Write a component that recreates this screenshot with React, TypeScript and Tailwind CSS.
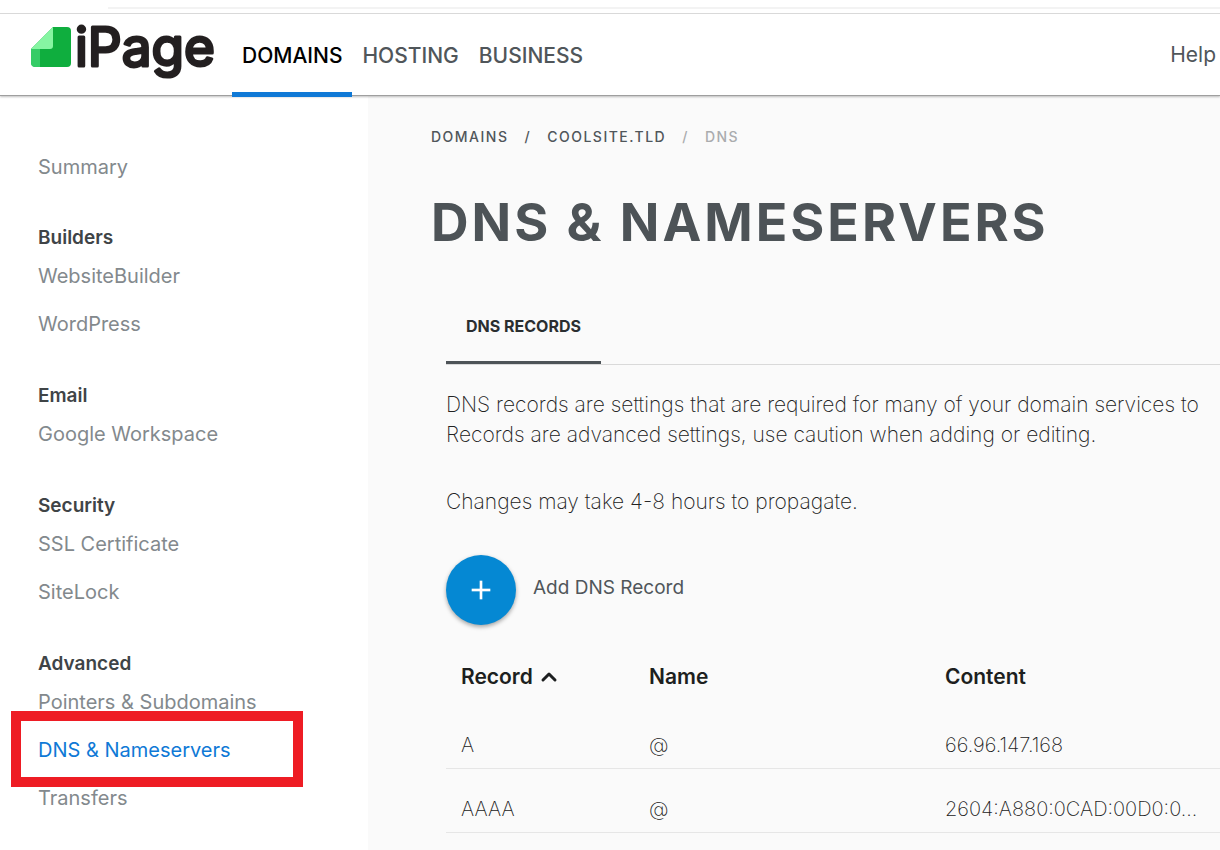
import { ChevronUp, Plus } from "lucide-react";

const navLinks = [
  { label: "DOMAINS", active: true },
  { label: "HOSTING", active: false },
  { label: "BUSINESS", active: false },
];

const sections = [
  { title: "Builders", items: ["WebsiteBuilder", "WordPress"] },
  { title: "Email", items: ["Google Workspace"] },
  { title: "Security", items: ["SSL Certificate", "SiteLock"] },
  { title: "Advanced", items: ["Pointers & Subdomains", "DNS & Nameservers", "Transfers"] },
];

const records = [
  { type: "A", name: "@", content: "66.96.147.168" },
  { type: "AAAA", name: "@", content: "2604:A880:0CAD:00D0:0..." },
];

function Logo() {
  return (
    <svg width="200" height="72" viewBox="0 0 200 72" role="img" aria-label="iPage" className="overflow-visible">
      <path d="M22 7h14q4 0 4 4v32q0 4-4 4H5q-4 0-5-4V29z" fill="#0fae3e" />
      <path d="M0 29h9v18H4q-4 0-4-4z" fill="#35cc66" />
      <path d="M22 7v19q0 3-3 3H0z" fill="#86f5a2" />
      <text
        x="44"
        y="46"
        fill="#231f20"
        stroke="#231f20"
        strokeWidth="3"
        strokeLinejoin="round"
        className="font-['Inter',sans-serif] text-[53px] font-normal"
      >
        iPage
      </text>
    </svg>
  );
}

function Header() {
  return (
    <header className="relative z-10 bg-white border-b border-[#9f9f9f] shadow-[0_1px_2px_rgba(0,0,0,0.25)]">
      <div className="pt-[7px] border-b border-[#d9d9d9]">
        <div className="ml-[108px] mb-1 h-0.5 bg-[#f3f3f3]" />
      </div>
      <div className="flex h-[81px] pl-[31px] pr-1">
        <a href="#home" className="mt-1.5 w-[201px] shrink-0">
          <Logo />
        </a>
        <nav className="flex">
          {navLinks.map((link) => (
            <a
              key={link.label}
              href="#nav"
              className={
                link.active
                  ? "relative px-2.5 pt-[27px] text-[21px] leading-[30px] font-medium text-black after:absolute after:left-0 after:right-0 after:-bottom-0.5 after:h-[5px] after:bg-[#0f79d6]"
                  : "px-2.5 pt-[27px] text-[21px] leading-[30px] font-medium text-[#50565a]"
              }
            >
              {link.label}
            </a>
          ))}
        </nav>
        <a href="#help" className="ml-auto pt-[26px] text-[21px] leading-[30px] text-[#50565a]">
          Help
        </a>
      </div>
    </header>
  );
}

function Sidebar() {
  return (
    <aside className="w-[368px] shrink-0 bg-white pl-[38px] pt-[59px] text-xl leading-6 text-[#83898d]">
      <a href="#summary" className="block mb-[47px]">Summary</a>
      {sections.map((section) => (
        <div key={section.title} className="mb-12">
          <h2 className="mb-3.5 text-[19px] leading-6 font-semibold text-[#3f4447]">{section.title}</h2>
          <ul className="space-y-6">
            {section.items.map((item) => (
              <li key={item} className="relative">
                {item === "DNS & Nameservers" ? (
                  <>
                    <a href="#dns" className="text-[#0f79d6]">{item}</a>
                    <div className="absolute -left-[27px] -top-[27px] h-[76px] w-[292px] border-10 border-[#ee1c24] pointer-events-none" />
                  </>
                ) : (
                  <a href="#item">{item}</a>
                )}
              </li>
            ))}
          </ul>
        </div>
      ))}
    </aside>
  );
}

function RecordsTable() {
  return (
    <table className="mt-[25px] w-full table-fixed text-left text-xl leading-6">
      <thead>
        <tr className="text-[21px] text-[#1d1f20]">
          <th className="w-[188px] h-[54px] pl-[15px] font-semibold">
            <button className="flex items-center gap-1">
              Record
              <ChevronUp className="size-6" strokeWidth={3} />
            </button>
          </th>
          <th className="w-[296px] pl-[15px] font-semibold">Name</th>
          <th className="pl-[15px] font-semibold">Content</th>
        </tr>
      </thead>
      <tbody className="font-extralight text-[#222]">
        {records.map((record) => (
          <tr key={record.type} className="h-16 border-b border-[#e6e6e6]">
            <td className="pl-[15px] pt-[18px]">{record.type}</td>
            <td className="pl-[15px] pt-[18px]">{record.name}</td>
            <td className="pl-[15px] pt-[18px] whitespace-nowrap">{record.content}</td>
          </tr>
        ))}
      </tbody>
    </table>
  );
}

export default function App() {
  return (
    <div className="flex min-h-screen flex-col overflow-hidden bg-[#fafafa] font-['Inter',sans-serif]">
      <Header />
      <div className="flex flex-1">
        <Sidebar />
        <main className="min-w-0 flex-1 pl-[63px] pt-[31px]">
          <nav className="flex gap-4 text-sm leading-5 font-medium tracking-[1.5px] text-[#50565a]">
            <a href="#domains">DOMAINS</a>
            <span>/</span>
            <a href="#coolsite">COOLSITE.TLD</a>
            <span className="text-[#aaacae]">/</span>
            <span className="text-[#aaacae]">DNS</span>
          </nav>
          <h1 className="mt-[46px] whitespace-nowrap text-[52px] leading-[60px] font-bold tracking-[3px] text-[#4d5357]">
            DNS &amp; NAMESERVERS
          </h1>

          <div className="pl-[15px]">
            <div role="tablist" className="mt-12 flex border-b border-[#d9d9d9]">
              <button
                role="tab"
                aria-selected="true"
                className="h-[63px] border-b-3 border-[#4d5357] px-5 pb-2.5 text-base leading-5 font-bold text-[#2a2e30]"
              >
                DNS RECORDS
              </button>
            </div>

            <div className="mt-[25px] overflow-hidden whitespace-nowrap text-[21px] leading-[30px] font-extralight text-[#222]">
              <p>
                DNS records are settings that are required for many of your domain services to
                <br />
                Records are advanced settings, use caution when adding or editing.
              </p>
              <p className="mt-[37px]">Changes may take 4-8 hours to propagate.</p>
            </div>

            <div className="mt-[38px] flex items-center gap-[17px] text-[19px]">
              <button
                id="add-record"
                aria-label="Add DNS Record"
                className="flex size-[70px] items-center justify-center rounded-full bg-[#0588d3] text-white shadow-[0_2px_4px_rgba(0,0,0,0.35)]"
              >
                <Plus className="size-8" strokeWidth={2} strokeLinecap="butt" />
              </button>
              <label htmlFor="add-record" className="pb-1 text-[#50565a]">Add DNS Record</label>
            </div>

            <RecordsTable />
          </div>
        </main>
      </div>
    </div>
  );
}
